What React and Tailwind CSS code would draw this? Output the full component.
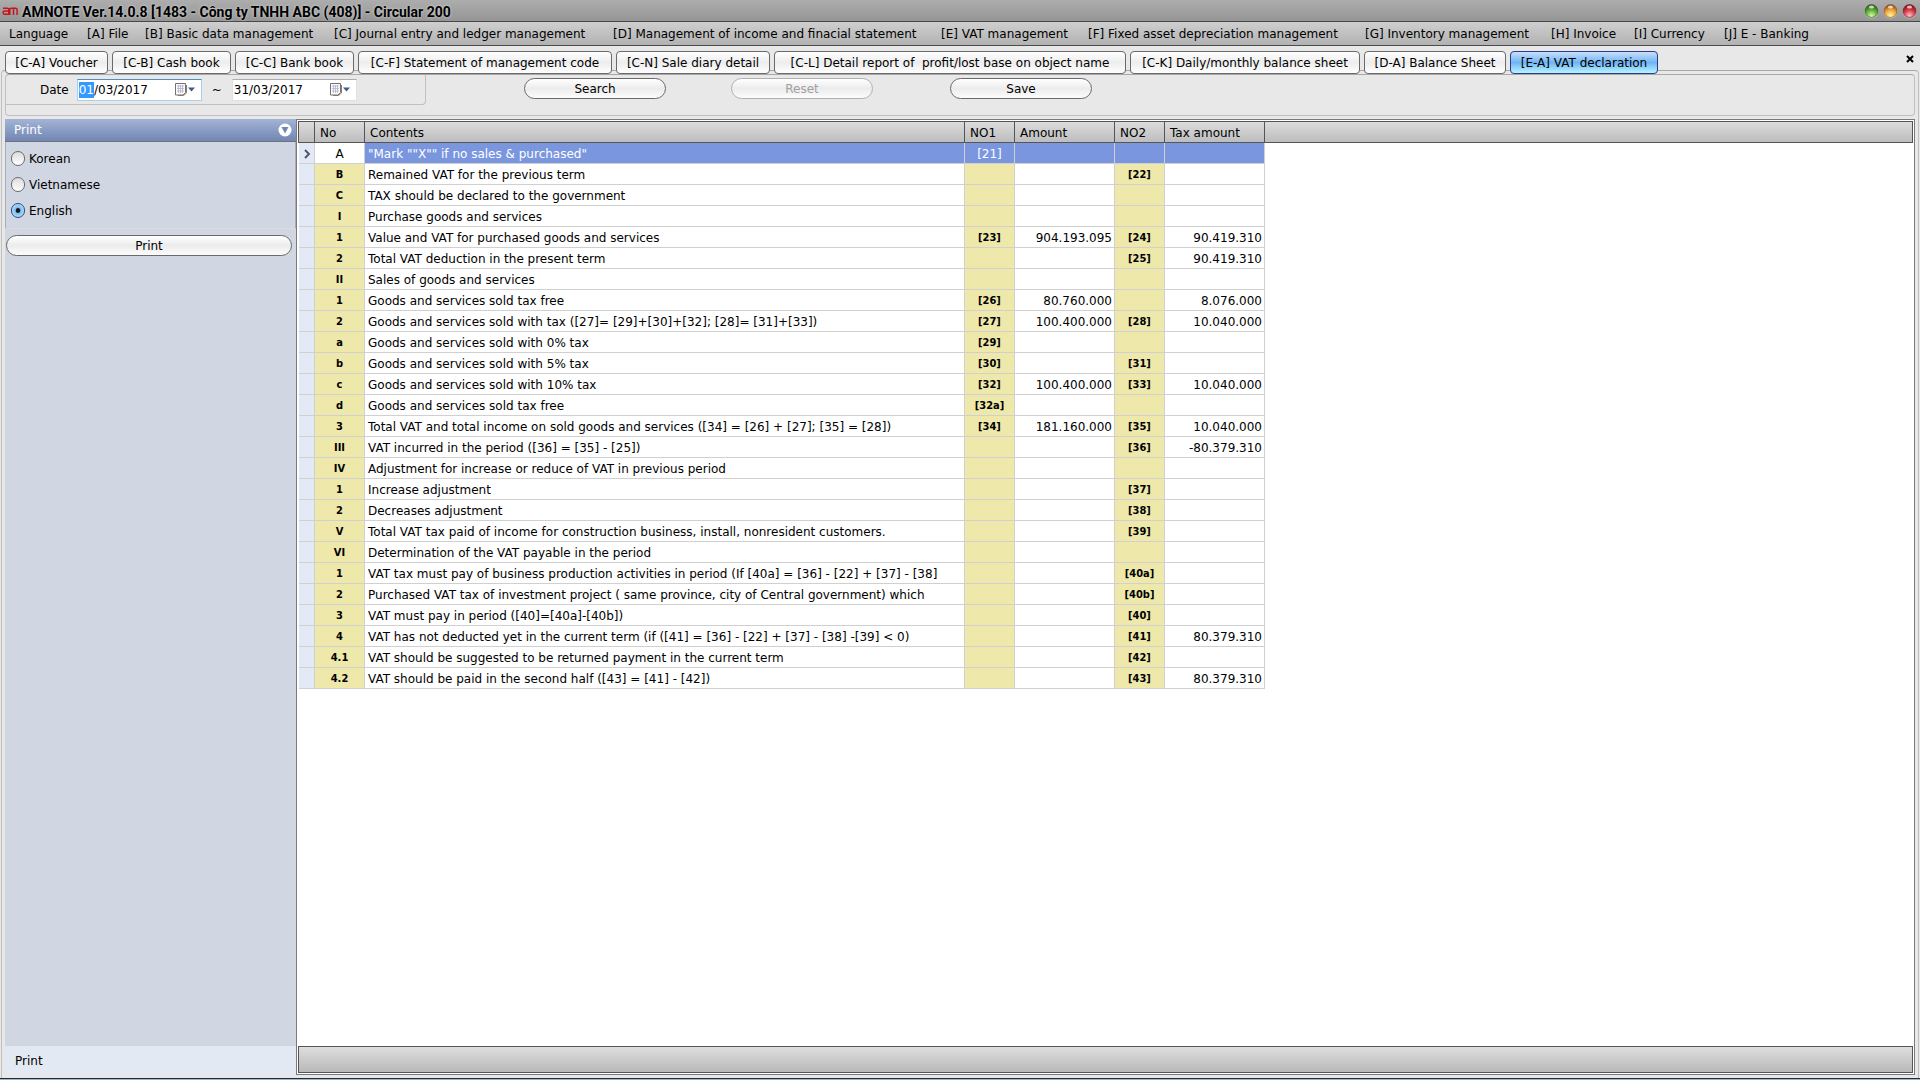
import React, { useState } from 'react';

const MENU_ITEMS = [
    ['Language', 'w-[78px]'],
    ['[A] File', 'w-[58px]'],
    ['[B] Basic data management', 'w-[189px]'],
    ['[C] Journal entry and ledger management', 'w-[279px]'],
    ['[D] Management of income and finacial statement', 'w-[328px]'],
    ['[E] VAT management', 'w-[147px]'],
    ['[F] Fixed asset depreciation management', 'w-[277px]'],
    ['[G] Inventory management', 'w-[186px]'],
    ['[H] Invoice', 'w-[83px]'],
    ['[I] Currency', 'w-[90px]'],
    ['[J] E - Banking', 'w-[110px]']
];

const TABS = [
    ['[C-A] Voucher', 'w-[103px]'],
    ['[C-B] Cash book', 'w-[119px]'],
    ['[C-C] Bank book', 'w-[119px]'],
    ['[C-F] Statement of management code', 'w-[254px]'],
    ['[C-N] Sale diary detail', 'w-[154px]'],
    ['[C-L] Detail report of  profit/lost base on object name', 'w-[352px]'],
    ['[C-K] Daily/monthly balance sheet', 'w-[230px]'],
    ['[D-A] Balance Sheet', 'w-[142px]'],
    ['[E-A] VAT declaration', 'w-[148px]']
];

// no, contents, no1, amount, no2, tax amount
const ROWS = [
    ['A', '"Mark ""X"" if no sales & purchased"', '[21]', '', '', ''],
    ['B', 'Remained VAT for the previous term', '', '', '[22]', ''],
    ['C', 'TAX should be declared to the government', '', '', '', ''],
    ['I', 'Purchase goods and services', '', '', '', ''],
    ['1', 'Value and VAT for purchased goods and services', '[23]', '904.193.095', '[24]', '90.419.310'],
    ['2', 'Total VAT deduction in the present term', '', '', '[25]', '90.419.310'],
    ['II', 'Sales of goods and services', '', '', '', ''],
    ['1', 'Goods and services sold tax free', '[26]', '80.760.000', '', '8.076.000'],
    ['2', 'Goods and services sold with tax ([27]= [29]+[30]+[32]; [28]= [31]+[33])', '[27]', '100.400.000', '[28]', '10.040.000'],
    ['a', 'Goods and services sold with 0% tax', '[29]', '', '', ''],
    ['b', 'Goods and services sold with 5% tax', '[30]', '', '[31]', ''],
    ['c', 'Goods and services sold with 10% tax', '[32]', '100.400.000', '[33]', '10.040.000'],
    ['d', 'Goods and services sold tax free', '[32a]', '', '', ''],
    ['3', 'Total VAT and total income on sold goods and services ([34] = [26] + [27]; [35] = [28])', '[34]', '181.160.000', '[35]', '10.040.000'],
    ['III', 'VAT incurred in the period ([36] = [35] - [25])', '', '', '[36]', '-80.379.310'],
    ['IV', 'Adjustment for increase or reduce of VAT in previous period', '', '', '', ''],
    ['1', 'Increase adjustment', '', '', '[37]', ''],
    ['2', 'Decreases adjustment', '', '', '[38]', ''],
    ['V', 'Total VAT tax paid of income for construction business, install, nonresident customers.', '', '', '[39]', ''],
    ['VI', 'Determination of the VAT payable in the period', '', '', '', ''],
    ['1', 'VAT tax must pay of business production activities in period (If [40a] = [36] - [22] + [37] - [38]', '', '', '[40a]', ''],
    ['2', 'Purchased VAT tax of investment project ( same province, city of Central government) which', '', '', '[40b]', ''],
    ['3', 'VAT must pay in period ([40]=[40a]-[40b])', '', '', '[40]', ''],
    ['4', 'VAT has not deducted yet in the current term (if ([41] = [36] - [22] + [37] - [38] -[39] < 0)', '', '', '[41]', '80.379.310'],
    ['4.1', 'VAT should be suggested to be returned payment in the current term', '', '', '[42]', ''],
    ['4.2', 'VAT should be paid in the second half ([43] = [41] - [42])', '', '', '[43]', '80.379.310']
];

const PILL =
    'h-[21px] rounded-full border bg-linear-to-b from-white via-[#ececec] via-50% to-[#fcfcfc] text-center leading-none';

const Orb = ({ label, dark, mid, light }) => (
    <button aria-label={label}>
        <svg className="h-[15px] w-[15px]" viewBox="0 0 15 15">
            <defs>
                <radialGradient id={`orb-${label}`} cx="50%" cy="85%" r="80%">
                    <stop offset="0" stopColor={light} />
                    <stop offset=".55" stopColor={mid} />
                    <stop offset="1" stopColor={dark} />
                </radialGradient>
            </defs>
            <circle cx="7.5" cy="7.5" r="7" fill="#c8c8c8" />
            <circle cx="7.5" cy="7" r="6.5" fill={`url(#orb-${label})`} stroke={dark} strokeWidth=".6" />
            <ellipse cx="7.5" cy="3" rx="2.6" ry="1.6" fill="#fff" opacity=".7" />
        </svg>
    </button>
);

const TitleBar = () => (
    <header className="flex h-[22px] shrink-0 items-center gap-1 border-b border-[#484848] bg-linear-to-b from-[#adadad] to-[#959595] pr-[3px]">
        <svg className="ml-0.5 h-3 w-4" viewBox="0 0 16 12" fill="none" stroke="#c4161c" strokeWidth="1.5">
            <path d="M1 3.2h4.5c1 0 1.3.5 1.3 1.3V9.2M6.5 6H2.4C.6 6 .6 9.2 2.4 9.2h5.4V4.6c0-1 .5-1.4 1.4-1.4h4.4c1 0 1.5.5 1.5 1.4V10M11.5 3.5V10" />
        </svg>
        <h1 className="mt-[2px] font-['Roboto'] text-[14px] font-bold [text-shadow:0_0_3px_#ffffffaa]">
            AMNOTE Ver.14.0.8 [1483 - Công ty TNHH ABC (408)] - Circular 200
        </h1>
        <div className="mt-[2px] ml-auto flex gap-1">
            <Orb label="Minimize" dark="#2c5a1c" mid="#5fae38" light="#d6f8a8" />
            <Orb label="Maximize" dark="#8a4a1c" mid="#f0a838" light="#fff4a0" />
            <Orb label="Close" dark="#7a1018" mid="#d83a48" light="#ffc0c4" />
        </div>
    </header>
);

const DateField = ({ label, day, rest, active }) => (
    <div className={`flex h-[22px] w-[125px] items-center border bg-white pr-[6px] pl-px ${active ? 'border-[#a9cfee] border-t-[#4d8fc4]' : 'border-[#e0e0e6] border-t-[#abadb3]'}`}>
        {active && <span className="bg-[#3399ff] text-white">{day}</span>}
        <input
            aria-label={label}
            defaultValue={active ? rest : day + rest}
            className="min-w-0 flex-1 bg-transparent outline-none"
        />
        <svg className="h-[13px] w-5" viewBox="0 0 20 13">
            <path d="M3 12.5h5.500l3-2.500V2" fill="none" stroke="#8a8078" />
            <path d="M.5.5h10v9l-2.500 2.500H.5z" fill="#fbfbff" stroke="#77706c" />
            <path d="M2 3h7M2 5.500h7M2 8h7M3.500 2v8M5.500 2v8M7.500 2v8" stroke="#b4b4c8" strokeWidth=".8" />
            <path d="M13 4.500h7l-3.500 4z" fill="#3f5a8c" />
        </svg>
    </div>
);

const PrintPanel = () => {
    const [lang, setLang] = useState('English');
    return (
        <aside className="flex w-[291px] shrink-0 flex-col bg-[#d0d6e2]">
            <div className="flex h-[23px] shrink-0 items-center justify-between border-b border-[#6c7280] bg-linear-to-b from-[#a3b4d6] to-[#7286b2] pr-1 pl-[9px] text-white">
                <span>Print</span>
                <button aria-label="Collapse">
                    <svg className="h-3.5 w-3.5" viewBox="0 0 14 14">
                        <circle cx="7" cy="7" r="6.500" fill="#fff" />
                        <path d="M3.500 4h7L7 10.500z" fill="#7286b2" />
                    </svg>
                </button>
            </div>
            <div className="flex flex-col gap-[5px] border-x border-b border-[#a8adb8] border-b-[#dcdcdc] px-[5px] pt-[6px] pb-[7px]">
                {['Korean', 'Vietnamese', 'English'].map((name) => (
                    <label key={name} className="flex h-[21px] items-center gap-1">
                        <input
                            type="radio"
                            name="lang"
                            checked={lang === name}
                            onChange={() => setLang(name)}
                            className="h-[15px] w-[14px] appearance-none rounded-full border border-[#6a6a6a] bg-linear-to-b from-[#dcdcdc] to-white checked:border-[#2a4a7f] checked:bg-radial checked:from-[#101820] checked:from-20% checked:via-[#7cbcf0] checked:via-32% checked:to-[#d8f0ff]"
                        />
                        {name}
                    </label>
                ))}
            </div>
            <button className={`${PILL} mt-[6px] mr-1 ml-px shrink-0 border-[#6a6a6a]`}>Print</button>
            <div className="mt-auto flex h-[29px] items-center bg-[#e3e9f2] pl-[10px]">Print</div>
        </aside>
    );
};

const GridColumns = () => (
    <colgroup>
        <col className="w-[16px]" />
        <col className="w-[50px]" />
        <col className="w-[600px]" />
        <col className="w-[50px]" />
        <col className="w-[100px]" />
        <col className="w-[50px]" />
        <col className="w-[100px]" />
    </colgroup>
);

const VatGrid = () => {
    const head = 'border-r border-[#555] px-[5px] pt-px text-left font-normal';
    const cell = 'h-[21px] border-r border-b border-[#d0d0d0] pt-px';
    const code = `${cell} text-center`;
    return (
        <section className="flex min-w-0 flex-1 flex-col border border-[#7a7a7e] bg-white p-px">
            <div className="border border-[#555] bg-linear-to-b from-[#dcdcdc] to-[#bdbdbd]">
                <table className="w-[966px] table-fixed border-separate border-spacing-0">
                    <GridColumns />
                    <thead>
                        <tr className="h-[20px]">
                            <th className={head} />
                            <th className={head}>No</th>
                            <th className={head}>Contents</th>
                            <th className={head}>NO1</th>
                            <th className={head}>Amount</th>
                            <th className={head}>NO2</th>
                            <th className={head}>Tax amount</th>
                        </tr>
                    </thead>
                </table>
            </div>
            <table className="ml-px w-[966px] table-fixed border-separate border-spacing-0">
                <GridColumns />
                <tbody>
                    {ROWS.map(([no, contents, no1, amount, no2, tax], i) => {
                        const selected = i === 0;
                        const fill = selected ? 'bg-[#7a96df] text-white' : 'bg-white';
                        const tint = selected ? 'bg-[#7a96df] text-white' : "bg-[#eee8aa] font-['DejaVu_Sans_Condensed'] text-[11px] font-bold";
                        return (
                            <tr key={i}>
                                <td className={`${cell} bg-[#e3e9f5]`}>
                                    {selected && (
                                        <svg className="mx-auto h-2.5 w-2" viewBox="0 0 8 10">
                                            <path d="M2 1l4 4-4 4" fill="none" stroke="#4a5068" strokeWidth="1.800" />
                                        </svg>
                                    )}
                                </td>
                                <td className={`${code} ${selected ? 'bg-white' : tint}`}>{no}</td>
                                <td className={`${cell} overflow-hidden pl-[3px] whitespace-pre ${fill}`}>{contents}</td>
                                <td className={`${code} ${tint}`}>{no1}</td>
                                <td className={`${cell} pr-[2px] text-right ${fill}`}>{amount}</td>
                                <td className={`${code} ${tint}`}>{no2}</td>
                                <td className={`${cell} pr-[2px] text-right ${fill}`}>{tax}</td>
                            </tr>
                        );
                    })}
                </tbody>
            </table>
            <div className="mt-auto h-[27px] border border-[#555] bg-linear-to-b from-[#dedede] to-[#b8b8b8]" />
        </section>
    );
};

export default function App() {
    return (
        <div className="flex h-screen flex-col overflow-hidden bg-[#e8e8e8] font-['DejaVu_Sans',sans-serif] text-[12px] leading-4 text-black">
            <TitleBar />
            <nav className="flex h-[24px] shrink-0 items-center border-b border-[#4c4c4c] bg-linear-to-b from-[#cfcfcf] to-[#b2b2b2] pl-[9px]">
                {MENU_ITEMS.map(([item, width]) => (
                    <button key={item} className={`${width} text-left whitespace-nowrap`}>{item}</button>
                ))}
            </nav>

            <div className="z-10 flex shrink-0 items-start gap-1 pt-[5px] pr-[6px] pl-[5px]">
                {TABS.map(([tab, width], i) => (
                    <button
                        key={tab}
                        className={`${width} h-[23px] rounded-[4px] border whitespace-pre ${
                            i === TABS.length - 1
                                ? 'border-[#2a3a8c] bg-linear-to-b from-[#c8dffa] via-[#6fb4f4] via-50% to-[#b8f4ff]'
                                : 'border-[#6a6a6a] bg-linear-to-b from-white via-[#ededed] via-50% to-white'
                        }`}
                    >
                        {tab}
                    </button>
                ))}
                <button aria-label="Close tab" className="ml-auto">
                    <svg className="mt-1 h-2 w-2" viewBox="0 0 8 8">
                        <path d="M1 1l6 6M7 1L1 7" stroke="#000" strokeWidth="2" />
                    </svg>
                </button>
            </div>

            <main className="-mt-1 mr-px ml-px flex min-h-0 flex-1 flex-col rounded-t border border-b-0 border-[#c0c0c0] border-t-[#a8a8a8] px-[3px] pt-[3px] pb-[3px]">
                <div className="flex h-[42px] shrink-0 items-start rounded border border-[#c0c0c0] border-t-[#a8a8a8]">
                    <div className="flex h-[30px] w-[420px] items-center rounded-br border-r border-b border-[#c0c0c0] pl-[34px]">
                        <span className="mr-2">Date</span>
                        <DateField label="From date" day="01" rest="/03/2017" active />
                        <span className="mx-[10px]">~</span>
                        <DateField label="To date" day="31" rest="/03/2017" />
                    </div>
                    <div className="mt-[3px] ml-[98px] flex gap-[65px]">
                        <button className={`${PILL} w-[142px] border-[#6a6a6a]`}>Search</button>
                        <button disabled className={`${PILL} w-[142px] border-[#b0b0b0] text-[#a0a0a0]`}>Reset</button>
                        <button className={`${PILL} ml-3 w-[142px] border-[#6a6a6a]`}>Save</button>
                    </div>
                </div>
                <div className="mt-[3px] flex min-h-0 flex-1">
                    <PrintPanel />
                    <VatGrid />
                </div>
            </main>
            <div className="h-[2px] shrink-0 border-t border-[#1c2c3c] bg-[#9fb4c8]" />
        </div>
    );
}
